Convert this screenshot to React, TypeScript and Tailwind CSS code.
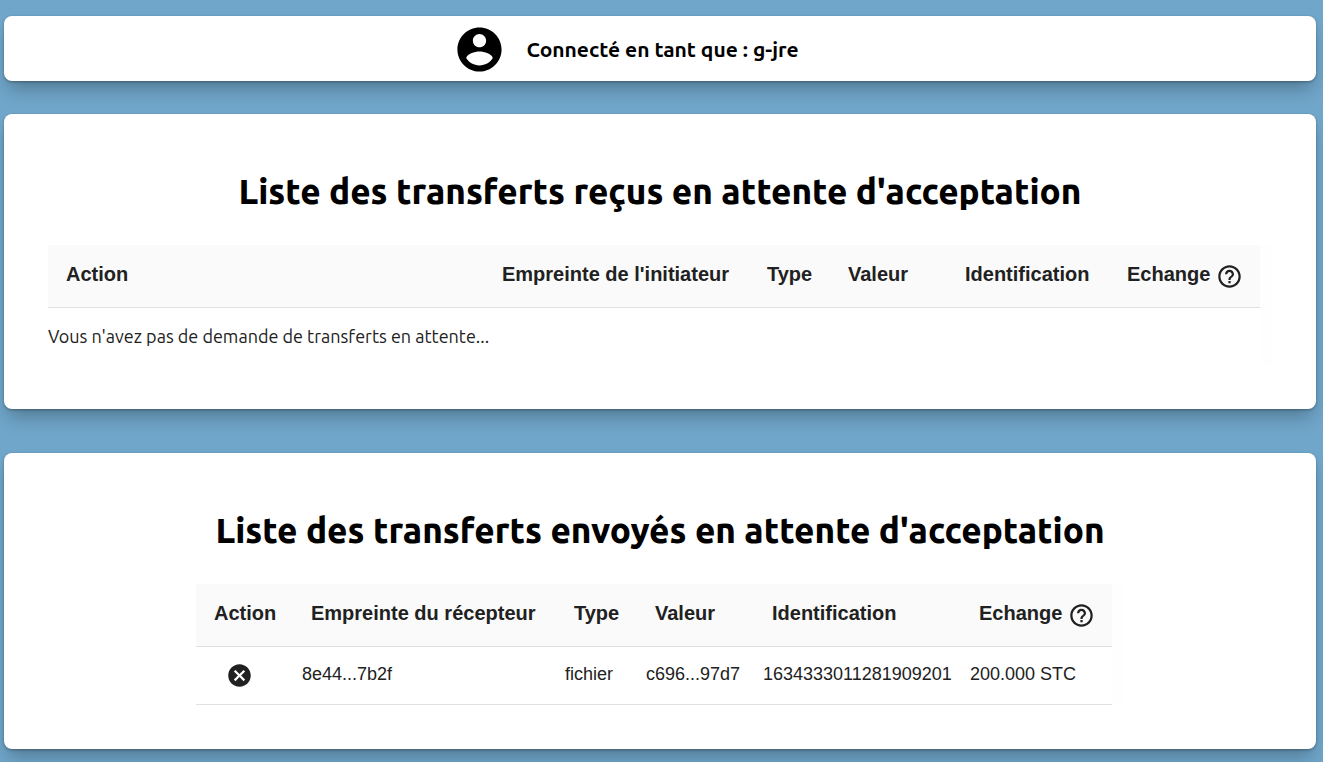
import type { ReactNode } from "react";

const shadow =
  "rounded-lg bg-white shadow-[0_12px_18px_-4px_rgba(0,0,0,0.26),0_1px_3px_rgba(0,0,0,0.3)]";

function HelpIcon() {
  return (
    <svg viewBox="0 0 24 24" className="size-[27px] fill-current" aria-hidden="true">
      <path d="M11 18h2v-2h-2v2zm1-16C6.48 2 2 6.48 2 12s4.48 10 10 10 10-4.48 10-10S17.52 2 12 2zm0 18c-4.41 0-8-3.59-8-8s3.59-8 8-8 8 3.59 8 8-3.59 8-8 8zm0-14c-2.21 0-4 1.79-4 4h2c0-1.1.9-2 2-2s2 .9 2 2c0 2-3 1.75-3 5h2c0-2.25 3-2.5 3-5 0-2.21-1.79-4-4-4z" />
    </svg>
  );
}

function CancelIcon() {
  return (
    <svg viewBox="0 0 24 24" className="size-[27px] fill-current" aria-hidden="true">
      <path d="M12 2C6.47 2 2 6.47 2 12s4.47 10 10 10 10-4.47 10-10S17.53 2 12 2zm5 13.59L15.59 17 12 13.41 8.41 17 7 15.59 10.59 12 7 8.41 8.41 7 12 10.59 15.59 7 17 8.41 13.41 12 17 15.59z" />
    </svg>
  );
}

function AccountIcon() {
  return (
    <svg viewBox="0 0 24 24" className="size-[53px] fill-current" aria-hidden="true">
      <path d="M12 2C6.48 2 2 6.48 2 12s4.48 10 10 10 10-4.48 10-10S17.52 2 12 2zm0 3c1.66 0 3 1.34 3 3s-1.34 3-3 3-3-1.34-3-3 1.34-3 3-3zm0 14.2c-2.5 0-4.71-1.28-6-3.22.03-1.99 4-3.08 6-3.08 1.99 0 5.97 1.09 6 3.08-1.29 1.94-3.5 3.22-6 3.22z" />
    </svg>
  );
}

function HeaderRow({ labels }: { labels: string[] }) {
  return (
    <thead>
      <tr className="h-[62px] border-b border-[#e0e0e0] bg-[#fafafa] text-left text-xl font-bold">
        {labels.map((label) => (
          <th key={label} scope="col" className="px-[18px] pb-1 whitespace-nowrap">
            {label}
          </th>
        ))}
        <th scope="col" className="pt-0.5 pl-[18px] whitespace-nowrap">
          <div className="flex items-center gap-1.5">
            <span className="pb-1.5">Echange</span>
            <button type="button" aria-label="Aide sur les échanges">
              <HelpIcon />
            </button>
          </div>
        </th>
      </tr>
    </thead>
  );
}

function Card({ title, children }: { title: string; children: ReactNode }) {
  return (
    <section className={`${shadow} flex flex-col items-center px-11 pt-[51px] pb-11`}>
      <h2 className="mb-7 text-center font-['Ubuntu','Noto_Sans',sans-serif] text-[35px] leading-[52px] font-extrabold text-black">
        {title}
      </h2>
      {children}
    </section>
  );
}

export default function App() {
  return (
    <div className="min-h-screen bg-[#70a6ca] pt-4 pr-[7px] pb-4 pl-1 font-['Liberation_Sans',Arial,sans-serif] text-[#212121]">
      <header
        className={`${shadow} mb-[33px] flex h-[65px] items-center justify-center gap-5 pt-0.5 pr-[68px] text-black`}
      >
        <AccountIcon />
        <h1 className="font-['Ubuntu','Noto_Sans',sans-serif] text-[21px] font-bold">
          Connecté en tant que : g-jre
        </h1>
      </header>

      <main className="flex flex-col gap-11">
        <Card title="Liste des transferts reçus en attente d'acceptation">
          <div className="w-full bg-[#fefefe] pr-3">
            <table className="w-full table-fixed border-collapse bg-white">
              <colgroup>
                <col />
                <col className="w-[265px]" />
                <col className="w-[81px]" />
                <col className="w-[117px]" />
                <col className="w-[162px]" />
                <col className="w-[151px]" />
              </colgroup>
              <HeaderRow
                labels={["Action", "Empreinte de l'initiateur", "Type", "Valeur", "Identification"]}
              />
              <tbody>
                <tr className="h-[58px]">
                  <td
                    colSpan={6}
                    className="font-['Ubuntu','Noto_Sans',sans-serif] text-lg"
                  >
                    Vous n'avez pas de demande de transferts en attente...
                  </td>
                </tr>
              </tbody>
            </table>
          </div>
        </Card>

        <Card title="Liste des transferts envoyés en attente d'acceptation">
          <div className="bg-[#fefefe] pr-3">
            <table className="w-[916px] table-fixed border-collapse bg-white">
              <colgroup>
                <col className="w-[97px]" />
                <col className="w-[263px]" />
                <col className="w-[81px]" />
                <col className="w-[117px]" />
                <col className="w-[207px]" />
                <col className="w-[151px]" />
              </colgroup>
              <HeaderRow
                labels={["Action", "Empreinte du récepteur", "Type", "Valeur", "Identification"]}
              />
              <tbody>
                <tr className="h-[58px] border-b border-[#e0e0e0] text-lg">
                  <td className="pr-2.5">
                    <button type="button" aria-label="Annuler le transfert" className="mx-auto block">
                      <CancelIcon />
                    </button>
                  </td>
                  <td className="px-[9px] pb-0.5">8e44...7b2f</td>
                  <td className="px-[9px] pb-0.5">fichier</td>
                  <td className="px-[9px] pb-0.5">c696...97d7</td>
                  <td className="px-[9px] pb-0.5">1634333011281909201</td>
                  <td className="px-[9px] pb-0.5">200.000 STC</td>
                </tr>
              </tbody>
            </table>
          </div>
        </Card>
      </main>
    </div>
  );
}
